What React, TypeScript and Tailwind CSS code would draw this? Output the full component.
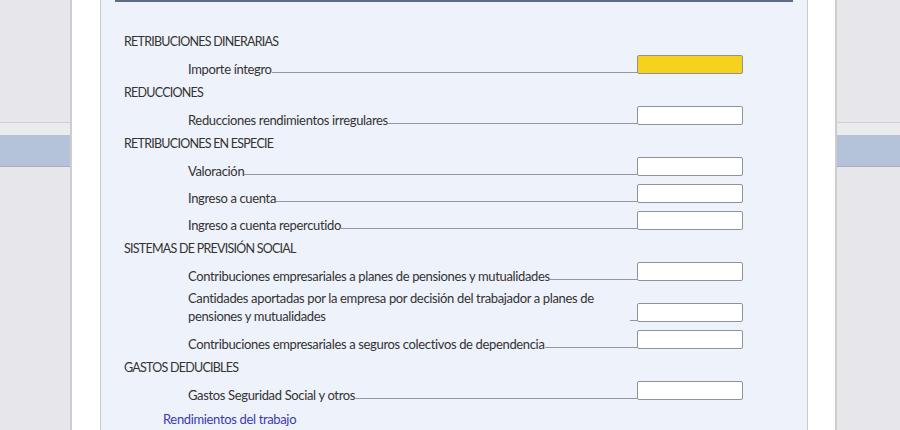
import React from 'react';

type Row =
  | { kind: 'header'; text: string }
  | { kind: 'item'; text: string; highlight?: boolean; wrap?: boolean };

const rows: Row[] = [
  { kind: 'header', text: 'RETRIBUCIONES DINERARIAS' },
  { kind: 'item', text: 'Importe íntegro', highlight: true },
  { kind: 'header', text: 'REDUCCIONES' },
  { kind: 'item', text: 'Reducciones rendimientos irregulares' },
  { kind: 'header', text: 'RETRIBUCIONES EN ESPECIE' },
  { kind: 'item', text: 'Valoración' },
  { kind: 'item', text: 'Ingreso a cuenta' },
  { kind: 'item', text: 'Ingreso a cuenta repercutido' },
  { kind: 'header', text: 'SISTEMAS DE PREVISIÓN SOCIAL' },
  { kind: 'item', text: 'Contribuciones empresariales a planes de pensiones y mutualidades' },
  {
    kind: 'item',
    text: 'Cantidades aportadas por la empresa por decisión del trabajador a planes de pensiones y mutualidades',
    wrap: true,
  },
  { kind: 'item', text: 'Contribuciones empresariales a seguros colectivos de dependencia' },
  { kind: 'header', text: 'GASTOS DEDUCIBLES' },
  { kind: 'item', text: 'Gastos Seguridad Social y otros' },
];

const FieldRow: React.FC<{ text: string; highlight?: boolean; wrap?: boolean; first: boolean }> = ({
  text,
  highlight,
  wrap,
  first,
}) => (
  <div className={`flex items-end pl-[73px] pr-[50px] ${first ? 'mt-[5px]' : 'mt-[8px]'}`}>
    <span
      className={`text-[13px] tracking-[-0.35px] text-[#333] mb-[-3px] ${
        wrap ? 'w-[442px] leading-[18px]' : 'whitespace-nowrap leading-[16px]'
      }`}
    >
      {text}
    </span>
    <div className="flex-1 min-w-0 border-b border-[#94979d] mr-[-4px] mb-[1px]" />
    <input
      type="text"
      className={`relative w-[106px] h-[19px] rounded-[2px] border border-[#8f9296] outline-none ${
        highlight ? 'bg-[#f6d21e]' : 'bg-white'
      }`}
    />
  </div>
);

export default function App() {
  let prev: Row['kind'] | null = null;
  return (
    <div
      className="relative w-[900px] h-[430px] overflow-hidden bg-[#e7e7eb]"
      style={{ fontFamily: 'Lato, "Noto Sans", sans-serif' }}
    >
      {/* page behind the dialog */}
      <div className="h-[122px]" />
      <div className="h-[1px] bg-[#cfd0d4]" />
      <div className="h-[12px] bg-[#ebebee]" />
      <div className="h-[32px] bg-[#b5c3da] border-b border-[#a5aec0]" />

      {/* dialog */}
      <div className="absolute left-[70px] top-0 w-[767px] h-[430px] flex bg-white border-x-2 border-[#cdcdd1] pl-[28px] pr-[27px]">
        <div className="flex-1 min-w-0 bg-[#eef2fa] border-x border-[#c9ccd3] px-[14px]">
          <div className="h-[2px] bg-[#5e6b86]" />
          <div className="flex flex-col pb-4">
            {rows.map((r, i) => {
              const after = prev;
              prev = r.kind;
              if (r.kind === 'header') {
                return (
                  <div
                    key={i}
                    className={`pl-[9px] text-[12.5px] tracking-[-0.75px] leading-[16px] text-[#333] ${
                      i === 0 ? 'mt-[32px]' : 'mt-[11px]'
                    }`}
                  >
                    {r.text}
                  </div>
                );
              }
              return (
                <FieldRow key={i} text={r.text} highlight={r.highlight} wrap={r.wrap} first={after === 'header'} />
              );
            })}
            <div className="mt-[11px] pl-[48px] text-[13px] tracking-[-0.35px] leading-[16px] text-[#3b3bb3]">
              Rendimientos del trabajo
            </div>
          </div>
        </div>
      </div>
    </div>
  );
}
